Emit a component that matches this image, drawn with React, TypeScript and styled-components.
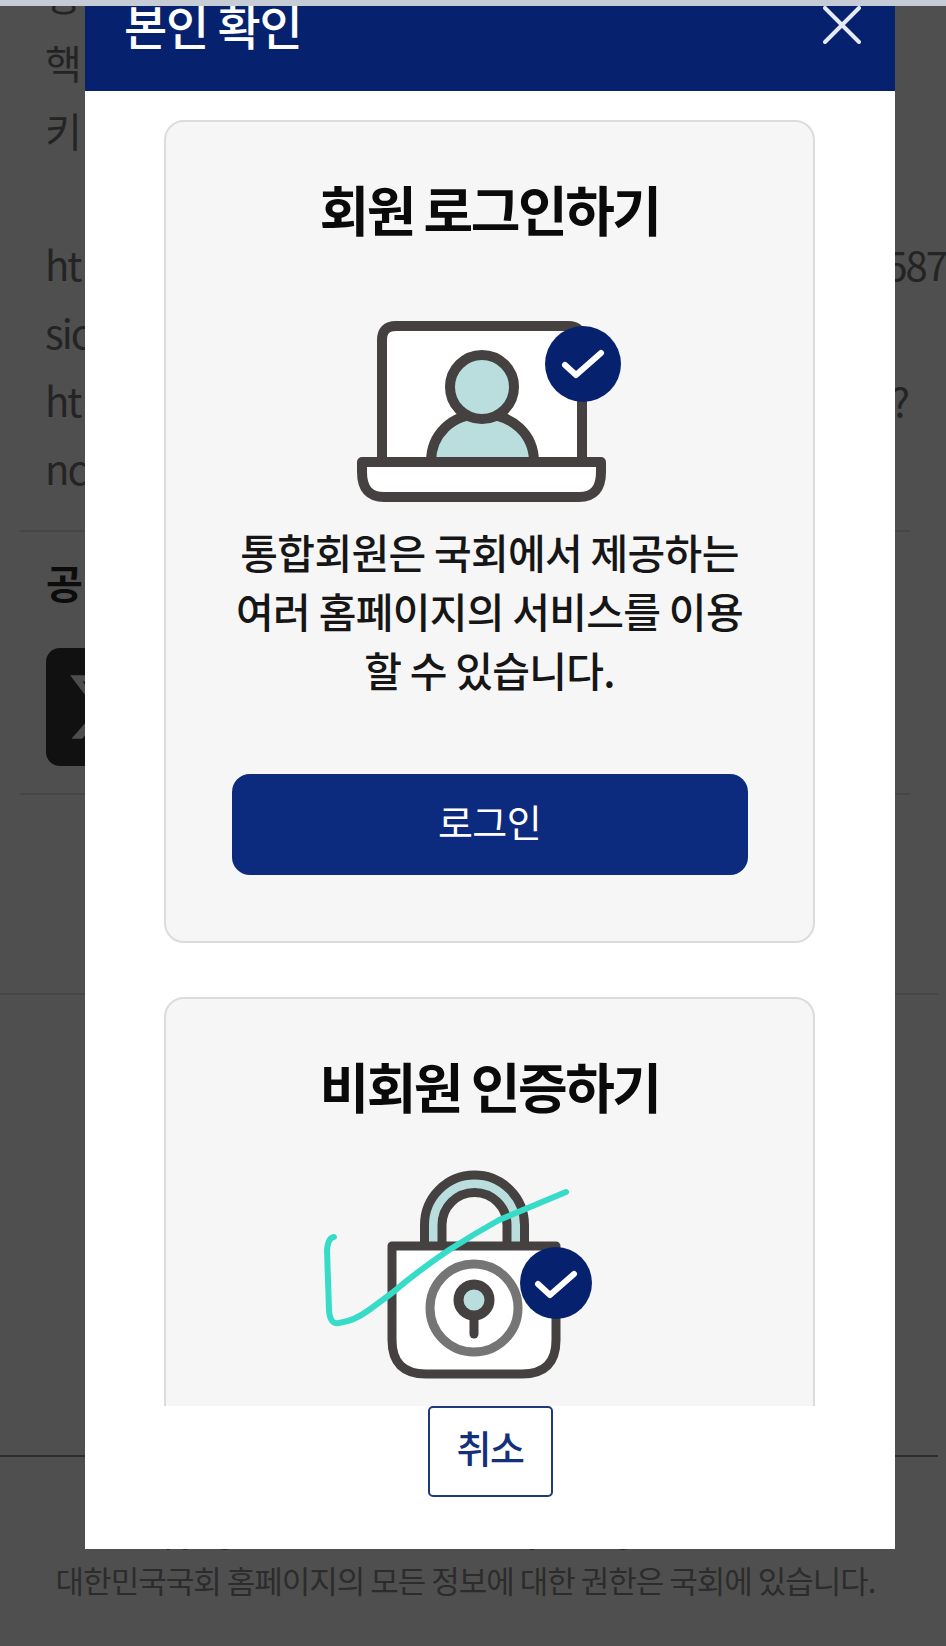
import React from 'react';
import styled, { createGlobalStyle } from 'styled-components';
import { FaXTwitter } from 'react-icons/fa6';

const GlobalStyle = createGlobalStyle`
  html, body {
    margin: 0;
    padding: 0;
    background: #4f4f4f;
  }
  * {
    box-sizing: border-box;
  }
`;

const Page = styled.div`
  position: relative;
  width: 946px;
  height: 1646px;
  overflow: hidden;
  background: #4f4f4f;
  font-family: 'Noto Sans CJK KR', 'Noto Sans', sans-serif;
`;

const StatusStrip = styled.div`
  position: absolute;
  top: 0;
  left: 0;
  right: 0;
  height: 6px;
  background: #c6ccd6;
  z-index: 3;
`;

/* the page behind the dialog */
const Behind = styled.div`
  margin-top: -40px;
  display: flex;
  flex-direction: column;
`;

const TextRow = styled.div<{ $height?: number }>`
  height: ${(p) => p.$height ?? 68}px;
  padding-left: 45px;
  display: flex;
  justify-content: space-between;
  align-items: center;
  font-size: 40px;
  letter-spacing: -2px;
  color: #242424;
  white-space: nowrap;
`;

const RowEnd = styled.span<{ $inset?: number }>`
  padding-right: ${(p) => p.$inset ?? 0}px;
`;

const Rule = styled.div<{ $gap: number; $to: number; $from: number; $strong?: boolean }>`
  margin-top: ${(p) => p.$gap}px;
  margin-left: ${(p) => p.$from}px;
  width: ${(p) => p.$to - p.$from}px;
  height: 2px;
  background: ${(p) => (p.$strong ? '#2e2e33' : '#464646')};
`;

const ShareTitle = styled.div`
  margin-top: 25px;
  padding-left: 46px;
  font-size: 40px;
  line-height: 50px;
  font-weight: 700;
  letter-spacing: 8px;
  color: #0c0c0c;
`;

const ShareTile = styled.div`
  margin: 41px 0 0 46px;
  width: 118px;
  height: 118px;
  border-radius: 14px;
  background: #111;
  color: #4d4d4d;
  display: flex;
  align-items: center;
  justify-content: center;
  font-size: 78px;
`;

const Copyright = styled.div<{ $gap?: number }>`
  margin-top: ${(p) => p.$gap ?? 0}px;
  padding-right: 15px;
  text-align: center;
  font-size: 31px;
  line-height: 50px;
  letter-spacing: -1px;
  color: #2c2c2c;
  white-space: nowrap;
`;

/* dialog */
const Modal = styled.div`
  position: absolute;
  top: -30px;
  left: 85px;
  width: 810px;
  height: 1579px;
  background: #fff;
  display: flex;
  flex-direction: column;
  z-index: 2;
`;

const ModalHeader = styled.div`
  flex: none;
  height: 121px;
  padding: 0 34px 12px 39px;
  background: #06226f;
  display: flex;
  align-items: center;
  justify-content: space-between;
  color: #fff;
`;

const ModalTitle = styled.h2`
  margin: 0;
  font-size: 47px;
  font-weight: 500;
  letter-spacing: -1.2px;
`;

const CloseIcon = styled.svg`
  width: 38px;
  height: 38px;
`;

const ModalBody = styled.div`
  flex: 1;
  min-height: 0;
  overflow: hidden;
  padding: 29px 80px 0 79px;
  display: flex;
  flex-direction: column;
  gap: 54px;
`;

const Card = styled.section`
  flex: none;
  border: 2px solid #dcdcdc;
  border-radius: 20px;
  background: #f6f6f6;
  padding: 49px 65px 66px;
  display: flex;
  flex-direction: column;
  align-items: center;
`;

const CardTitle = styled.h3`
  margin: 0;
  font-size: 54px;
  line-height: 76px;
  font-weight: 700;
  letter-spacing: -2.5px;
  color: #0a0a0a;
  white-space: nowrap;
`;

const Illustration = styled.svg<{ $top: number }>`
  display: block;
  flex: none;
  margin-top: ${(p) => p.$top}px;
`;

const CardText = styled.p`
  margin: 0;
  width: 100%;
  text-align: center;
  font-size: 41px;
  line-height: 59px;
  font-weight: 500;
  letter-spacing: -0.7px;
  color: #161616;
  white-space: pre-line;
`;

const PrimaryButton = styled.button`
  margin-top: 75px;
  width: 516px;
  height: 101px;
  border: 0;
  border-radius: 18px;
  padding: 0 0 8px;
  background: #0c2a7e;
  color: #fff;
  font-family: inherit;
  font-size: 38px;
  letter-spacing: -0.6px;
`;

const ModalFooter = styled.div`
  flex: none;
  height: 143px;
  display: flex;
  justify-content: center;
  align-items: flex-start;
`;

const CancelButton = styled.button`
  width: 125px;
  height: 91px;
  border: 2px solid #1d3a7d;
  border-radius: 5px;
  padding: 0 0 10px;
  background: #fff;
  color: #14307a;
  font-family: inherit;
  font-size: 38px;
  font-weight: 500;
  letter-spacing: -1.5px;
`;

const NAVY = '#06226f';
const LINE = '#444140';
const MINT = '#b9dedd';

const LaptopIcon: React.FC = () => (
  <Illustration $top={53} width={319} height={222} viewBox="1 0 319 222">
    <path d="M53 162V40Q53 26 67 26H239Q253 26 253 40V162Z" fill="#fff" stroke={LINE} strokeWidth={10} />
    <path d="M102 162C102 135 122 114 153 114S205 135 205 162Z" fill={MINT} stroke={LINE} strokeWidth={10} />
    <circle cx={153} cy={87} r={32} fill={MINT} stroke={LINE} strokeWidth={10} />
    <path d="M33 162H272V172Q272 197 250 197H55Q33 197 33 172Z" fill="#fff" stroke={LINE} strokeWidth={10} strokeLinejoin="round" />
    <circle cx={254} cy={64} r={38} fill={NAVY} />
    <path d="M236 65L247 75L272 53" fill="none" stroke="#fff" strokeWidth={6} strokeLinecap="round" strokeLinejoin="round" />
  </Illustration>
);

const LockIcon: React.FC = () => (
  <Illustration $top={26} width={379} height={260} viewBox="1 0 379 260">
    <path d="M134.5 96V75A41 41 0 0 1 216.5 75V96" fill="none" stroke={MINT} strokeWidth={20} />
    <path d="M125.5 96V75A50 50 0 0 1 225.5 75V96" fill="none" stroke={LINE} strokeWidth={9} />
    <path d="M143 96V75A32.5 32.5 0 0 1 208 75V96" fill="none" stroke={LINE} strokeWidth={9} />
    <path d="M93 96H257V190Q257 224 223 224H127Q93 224 93 190Z" fill="#fff" stroke={LINE} strokeWidth={9} strokeLinejoin="round" />
    <circle cx={175} cy={158} r={44} fill="#fff" stroke="#757575" strokeWidth={9} />
    <circle cx={175} cy={150} r={15.5} fill={MINT} stroke={LINE} strokeWidth={10} />
    <path d="M175 170V184" fill="none" stroke={LINE} strokeWidth={9} strokeLinecap="round" />
    <circle cx={257} cy={133} r={36} fill={NAVY} />
    <path d="M239 134L251 145L275 124" fill="none" stroke="#fff" strokeWidth={6} strokeLinecap="round" strokeLinejoin="round" />
    <path
      d="M35 87Q29 88 28 100L30 160Q31 175 40 173Q55 171 70 160L93 143Q120 120 150 100Q175 84 200 70L267 42"
      fill="none"
      stroke="#37dcc8"
      strokeWidth={6}
      strokeLinecap="round"
      strokeLinejoin="round"
    />
  </Illustration>
);

const App: React.FC = () => {
  return (
    <Page>
      <GlobalStyle />
      <StatusStrip />

      <Behind>
        <TextRow>항</TextRow>
        <TextRow>핵</TextRow>
        <TextRow>키</TextRow>
        <TextRow $height={66} />
        <TextRow>
          <span>ht</span>
          <RowEnd>587</RowEnd>
        </TextRow>
        <TextRow>sic</TextRow>
        <TextRow>
          <span>ht</span>
          <RowEnd $inset={38}>?</RowEnd>
        </TextRow>
        <TextRow>nc</TextRow>
        <Rule $gap={28} $from={20} $to={910} />
        <ShareTitle>공유</ShareTitle>
        <ShareTile>
          <FaXTwitter />
        </ShareTile>
        <Rule $gap={27} $from={20} $to={910} />
        <Rule $gap={198} $from={0} $to={938} />
        <Rule $gap={460} $from={0} $to={938} $strong />
        <Copyright $gap={48}>Copyright© National Assembly. All rights reserved.</Copyright>
        <Copyright>대한민국국회 홈페이지의 모든 정보에 대한 권한은 국회에 있습니다.</Copyright>
      </Behind>

      <Modal>
        <ModalHeader>
          <ModalTitle>본인 확인</ModalTitle>
          <CloseIcon viewBox="0 0 38 38">
            <path d="M2 2L36 36M36 2L2 36" stroke="#e6eaf4" strokeWidth={4} strokeLinecap="round" fill="none" />
          </CloseIcon>
        </ModalHeader>

        <ModalBody>
          <Card>
            <CardTitle>회원 로그인하기</CardTitle>
            <LaptopIcon />
            <CardText>{'통합회원은 국회에서 제공하는\n여러 홈페이지의 서비스를 이용\n할 수 있습니다.'}</CardText>
            <PrimaryButton>로그인</PrimaryButton>
          </Card>
          <Card>
            <CardTitle>비회원 인증하기</CardTitle>
            <LockIcon />
          </Card>
        </ModalBody>

        <ModalFooter>
          <CancelButton>취소</CancelButton>
        </ModalFooter>
      </Modal>
    </Page>
  );
};

export default App;
